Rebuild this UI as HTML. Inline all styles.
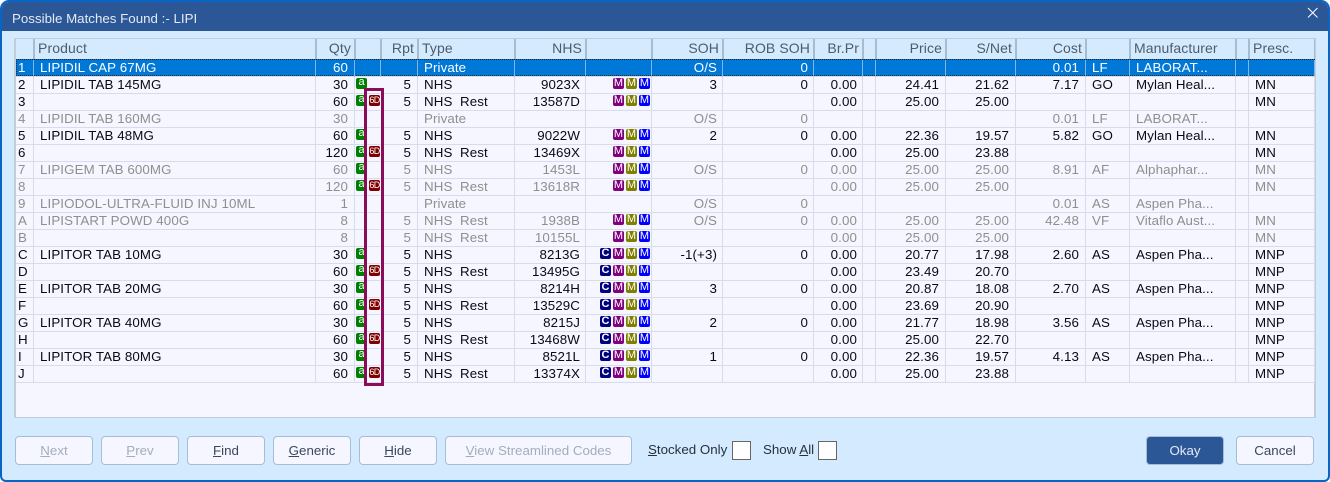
<!DOCTYPE html>
<html><head><meta charset="utf-8"><style>
html,body{margin:0;padding:0;width:1330px;height:482px;overflow:hidden;background:#fff}
*{box-sizing:border-box}
body{font-family:"Liberation Sans",sans-serif;font-size:13.33px}
#win{position:absolute;left:0;top:0;width:1330px;height:482px;background:#d4ebff;border:2px solid #0a64c4;border-radius:9px 9px 6px 6px;overflow:hidden}
#tb{position:absolute;left:0;top:0;width:1326px;height:29px;background:#2b5797;color:#e4eaf4;padding:9px 0 0 10px;line-height:16px;font-size:13.33px}
#x{position:absolute;left:1305px;top:5px}
#grid{position:absolute;left:12px;top:36px;width:1302px;height:380px;background:#f5f6ff;border:1px solid #c3cdd8;border-width:2px 2px 1px 2px}
#sel{position:absolute;left:16px;top:59px;width:1299px;height:17px;background:#0078d7;border-top:1px dotted #222;border-bottom:1px dotted #3a2a10;border-left:1px dotted #222;border-right:1px dotted #222}
table{position:absolute;left:16px;top:39px;border-collapse:separate;border-spacing:0;table-layout:fixed;width:1299px;color:#0a0a14;letter-spacing:.1px}
th{height:20px;background:#d4ebff;color:#4d5c6c;font-weight:normal;font-size:14px;text-align:left;padding:0 3px;border-right:1px solid #a6bcd3;border-left:1px solid #a6bcd3;line-height:19px;overflow:hidden;white-space:nowrap;vertical-align:top}
th:first-child{border-left:0}
th.r{text-align:right}
tr.sp td{height:1px;padding:0;border:0;line-height:0;font-size:0}
tr.d td{height:17px;padding:0 5px 0 6px;border-right:1px solid #d8dbe8;border-bottom:1px solid #d8dbe8;line-height:15px;white-space:pre;overflow:visible;position:relative;vertical-align:top}
tr.d td:nth-child(1){padding-left:2px;padding-right:0}
tr.d td:nth-child(3),tr.d td:nth-child(5),tr.d td:nth-child(7),tr.d td:nth-child(9),tr.d td:nth-child(10),tr.d td:nth-child(11),tr.d td:nth-child(13),tr.d td:nth-child(14),tr.d td:nth-child(15){text-align:right}
tr.d td:nth-child(3),tr.d td:nth-child(5),tr.d td:nth-child(13),tr.d td:nth-child(14),tr.d td:nth-child(15){padding-right:6px}
tr.d td:nth-child(4){border-right-color:transparent}
tr.g td{color:#8f8f8f}
tr.s td{color:#fff;border-right-color:#7fb8e6;border-bottom-color:#d8dbe8}
tr.s td:nth-child(4){border-right-color:#7fb8e6}
i{position:absolute;top:1px;width:11px;height:11px;border-radius:2px;color:#fff;font:11px/11px "Liberation Sans",sans-serif;text-align:center;letter-spacing:0;overflow:hidden}
.a{left:1px;background:#008000;line-height:9px}
tr.d td i.x{left:14px;background:#800000;font-size:9px;line-height:11px;letter-spacing:-.6px;width:11px}
.c{left:14px;background:#000080;font-weight:bold}
.m1{left:27px;background:#800080}
.m2{left:40px;background:#808000}
.m3{left:53px;background:#0000ff}
#box{position:absolute;left:364px;top:88px;width:20px;height:298px;border:3px solid #8b0c58;z-index:5}
.b{position:absolute;top:434px;height:29px;width:78px;background:#f5f6ff;border:1px solid #a6bdd5;border-radius:4px;text-align:center;line-height:27px;color:#3c4858;font-size:13.33px;white-space:nowrap}
.dis{color:#a4adbb}
.b u{text-decoration:underline}
.lb{position:absolute;top:440px;color:#26303c;line-height:16px;font-size:13.33px;white-space:nowrap}
.cb{position:absolute;top:439px;width:19px;height:19px;background:#fff;border:1px solid #666}
</style></head><body>
<div id="win">
<div id="tb">Possible Matches Found :- LIPI</div>
<svg id="x" width="12" height="12" viewBox="0 0 12 12"><path d="M1 1L10.500 10.500M10.500 1L1 10.500" stroke="#fff" stroke-width="1" fill="none"/></svg>
<div id="grid"></div>
<div class="b dis" style="left:13px"><u>N</u>ext</div>
<div class="b dis" style="left:99px"><u>P</u>rev</div>
<div class="b" style="left:185px"><u>F</u>ind</div>
<div class="b" style="left:271px"><u>G</u>eneric</div>
<div class="b" style="left:357px"><u>H</u>ide</div>
<div class="b dis" style="left:443px;width:187px"><u>V</u>iew Streamlined Codes</div>
<div class="lb" style="left:646px"><u>S</u>tocked Only</div><div class="cb" style="left:730px"></div>
<div class="lb" style="left:761px">Show <u>A</u>ll</div><div class="cb" style="left:816px"></div>
<div class="b" style="left:1144px;background:#2b5797;color:#e4eaf4;border-color:#a6bdd5">Okay</div>
<div class="b" style="left:1234px">Cancel</div>
</div>
<div id="sel"></div>
<table>
<colgroup><col style="width:18px"><col style="width:282px"><col style="width:39px"><col style="width:26px"><col style="width:37px"><col style="width:97px"><col style="width:71px"><col style="width:66px"><col style="width:71px"><col style="width:91px"><col style="width:49px"><col style="width:13px"><col style="width:70px"><col style="width:70px"><col style="width:70px"><col style="width:44px"><col style="width:106px"><col style="width:13px"><col style="width:66px"></colgroup>
<tr><th></th><th>Product</th><th class="r">Qty</th><th></th><th class="r">Rpt</th><th>Type</th><th class="r">NHS</th><th></th><th class="r">SOH</th><th class="r">ROB SOH</th><th class="r">Br.Pr</th><th></th><th class="r">Price</th><th class="r">S/Net</th><th class="r">Cost</th><th></th><th>Manufacturer</th><th></th><th>Presc.</th></tr>
<tr class="sp"><td colspan="19"></td></tr>
<tr class="d s"><td>1</td><td>LIPIDIL CAP 67MG</td><td>60</td><td></td><td></td><td>Private</td><td></td><td></td><td>O/S</td><td>0</td><td></td><td></td><td></td><td></td><td>0.01</td><td>LF</td><td>LABORAT...</td><td></td><td></td></tr>
<tr class="d"><td>2</td><td>LIPIDIL TAB 145MG</td><td>30</td><td><i class="a">a</i></td><td>5</td><td>NHS</td><td>9023X</td><td><i class="m1">M</i><i class="m2">M</i><i class="m3">M</i></td><td>3</td><td>0</td><td>0.00</td><td></td><td>24.41</td><td>21.62</td><td>7.17</td><td>GO</td><td>Mylan Heal...</td><td></td><td>MN</td></tr>
<tr class="d"><td>3</td><td></td><td>60</td><td><i class="a">a</i><i class="x">6D</i></td><td>5</td><td>NHS  Rest</td><td>13587D</td><td><i class="m1">M</i><i class="m2">M</i><i class="m3">M</i></td><td></td><td></td><td>0.00</td><td></td><td>25.00</td><td>25.00</td><td></td><td></td><td></td><td></td><td>MN</td></tr>
<tr class="d g"><td>4</td><td>LIPIDIL TAB 160MG</td><td>30</td><td></td><td></td><td>Private</td><td></td><td></td><td>O/S</td><td>0</td><td></td><td></td><td></td><td></td><td>0.01</td><td>LF</td><td>LABORAT...</td><td></td><td></td></tr>
<tr class="d"><td>5</td><td>LIPIDIL TAB 48MG</td><td>60</td><td><i class="a">a</i></td><td>5</td><td>NHS</td><td>9022W</td><td><i class="m1">M</i><i class="m2">M</i><i class="m3">M</i></td><td>2</td><td>0</td><td>0.00</td><td></td><td>22.36</td><td>19.57</td><td>5.82</td><td>GO</td><td>Mylan Heal...</td><td></td><td>MN</td></tr>
<tr class="d"><td>6</td><td></td><td>120</td><td><i class="a">a</i><i class="x">6D</i></td><td>5</td><td>NHS  Rest</td><td>13469X</td><td><i class="m1">M</i><i class="m2">M</i><i class="m3">M</i></td><td></td><td></td><td>0.00</td><td></td><td>25.00</td><td>23.88</td><td></td><td></td><td></td><td></td><td>MN</td></tr>
<tr class="d g"><td>7</td><td>LIPIGEM TAB 600MG</td><td>60</td><td><i class="a">a</i></td><td>5</td><td>NHS</td><td>1453L</td><td><i class="m1">M</i><i class="m2">M</i><i class="m3">M</i></td><td>O/S</td><td>0</td><td>0.00</td><td></td><td>25.00</td><td>25.00</td><td>8.91</td><td>AF</td><td>Alphaphar...</td><td></td><td>MN</td></tr>
<tr class="d g"><td>8</td><td></td><td>120</td><td><i class="a">a</i><i class="x">6D</i></td><td>5</td><td>NHS  Rest</td><td>13618R</td><td><i class="m1">M</i><i class="m2">M</i><i class="m3">M</i></td><td></td><td></td><td>0.00</td><td></td><td>25.00</td><td>25.00</td><td></td><td></td><td></td><td></td><td>MN</td></tr>
<tr class="d g"><td>9</td><td>LIPIODOL-ULTRA-FLUID INJ 10ML</td><td>1</td><td></td><td></td><td>Private</td><td></td><td></td><td>O/S</td><td>0</td><td></td><td></td><td></td><td></td><td>0.01</td><td>AS</td><td>Aspen Pha...</td><td></td><td></td></tr>
<tr class="d g"><td>A</td><td>LIPISTART POWD 400G</td><td>8</td><td></td><td>5</td><td>NHS  Rest</td><td>1938B</td><td><i class="m1">M</i><i class="m2">M</i><i class="m3">M</i></td><td>O/S</td><td>0</td><td>0.00</td><td></td><td>25.00</td><td>25.00</td><td>42.48</td><td>VF</td><td>Vitaflo Aust...</td><td></td><td>MN</td></tr>
<tr class="d g"><td>B</td><td></td><td>8</td><td></td><td>5</td><td>NHS  Rest</td><td>10155L</td><td><i class="m1">M</i><i class="m2">M</i><i class="m3">M</i></td><td></td><td></td><td>0.00</td><td></td><td>25.00</td><td>25.00</td><td></td><td></td><td></td><td></td><td>MN</td></tr>
<tr class="d"><td>C</td><td>LIPITOR TAB 10MG</td><td>30</td><td><i class="a">a</i></td><td>5</td><td>NHS</td><td>8213G</td><td><i class="c">C</i><i class="m1">M</i><i class="m2">M</i><i class="m3">M</i></td><td>-1(+3)</td><td>0</td><td>0.00</td><td></td><td>20.77</td><td>17.98</td><td>2.60</td><td>AS</td><td>Aspen Pha...</td><td></td><td>MNP</td></tr>
<tr class="d"><td>D</td><td></td><td>60</td><td><i class="a">a</i><i class="x">6D</i></td><td>5</td><td>NHS  Rest</td><td>13495G</td><td><i class="c">C</i><i class="m1">M</i><i class="m2">M</i><i class="m3">M</i></td><td></td><td></td><td>0.00</td><td></td><td>23.49</td><td>20.70</td><td></td><td></td><td></td><td></td><td>MNP</td></tr>
<tr class="d"><td>E</td><td>LIPITOR TAB 20MG</td><td>30</td><td><i class="a">a</i></td><td>5</td><td>NHS</td><td>8214H</td><td><i class="c">C</i><i class="m1">M</i><i class="m2">M</i><i class="m3">M</i></td><td>3</td><td>0</td><td>0.00</td><td></td><td>20.87</td><td>18.08</td><td>2.70</td><td>AS</td><td>Aspen Pha...</td><td></td><td>MNP</td></tr>
<tr class="d"><td>F</td><td></td><td>60</td><td><i class="a">a</i><i class="x">6D</i></td><td>5</td><td>NHS  Rest</td><td>13529C</td><td><i class="c">C</i><i class="m1">M</i><i class="m2">M</i><i class="m3">M</i></td><td></td><td></td><td>0.00</td><td></td><td>23.69</td><td>20.90</td><td></td><td></td><td></td><td></td><td>MNP</td></tr>
<tr class="d"><td>G</td><td>LIPITOR TAB 40MG</td><td>30</td><td><i class="a">a</i></td><td>5</td><td>NHS</td><td>8215J</td><td><i class="c">C</i><i class="m1">M</i><i class="m2">M</i><i class="m3">M</i></td><td>2</td><td>0</td><td>0.00</td><td></td><td>21.77</td><td>18.98</td><td>3.56</td><td>AS</td><td>Aspen Pha...</td><td></td><td>MNP</td></tr>
<tr class="d"><td>H</td><td></td><td>60</td><td><i class="a">a</i><i class="x">6D</i></td><td>5</td><td>NHS  Rest</td><td>13468W</td><td><i class="c">C</i><i class="m1">M</i><i class="m2">M</i><i class="m3">M</i></td><td></td><td></td><td>0.00</td><td></td><td>25.00</td><td>22.70</td><td></td><td></td><td></td><td></td><td>MNP</td></tr>
<tr class="d"><td>I</td><td>LIPITOR TAB 80MG</td><td>30</td><td><i class="a">a</i></td><td>5</td><td>NHS</td><td>8521L</td><td><i class="c">C</i><i class="m1">M</i><i class="m2">M</i><i class="m3">M</i></td><td>1</td><td>0</td><td>0.00</td><td></td><td>22.36</td><td>19.57</td><td>4.13</td><td>AS</td><td>Aspen Pha...</td><td></td><td>MNP</td></tr>
<tr class="d"><td>J</td><td></td><td>60</td><td><i class="a">a</i><i class="x">6D</i></td><td>5</td><td>NHS  Rest</td><td>13374X</td><td><i class="c">C</i><i class="m1">M</i><i class="m2">M</i><i class="m3">M</i></td><td></td><td></td><td>0.00</td><td></td><td>25.00</td><td>23.88</td><td></td><td></td><td></td><td></td><td>MNP</td></tr>
</table>
<div id="box"></div>
</body></html>
